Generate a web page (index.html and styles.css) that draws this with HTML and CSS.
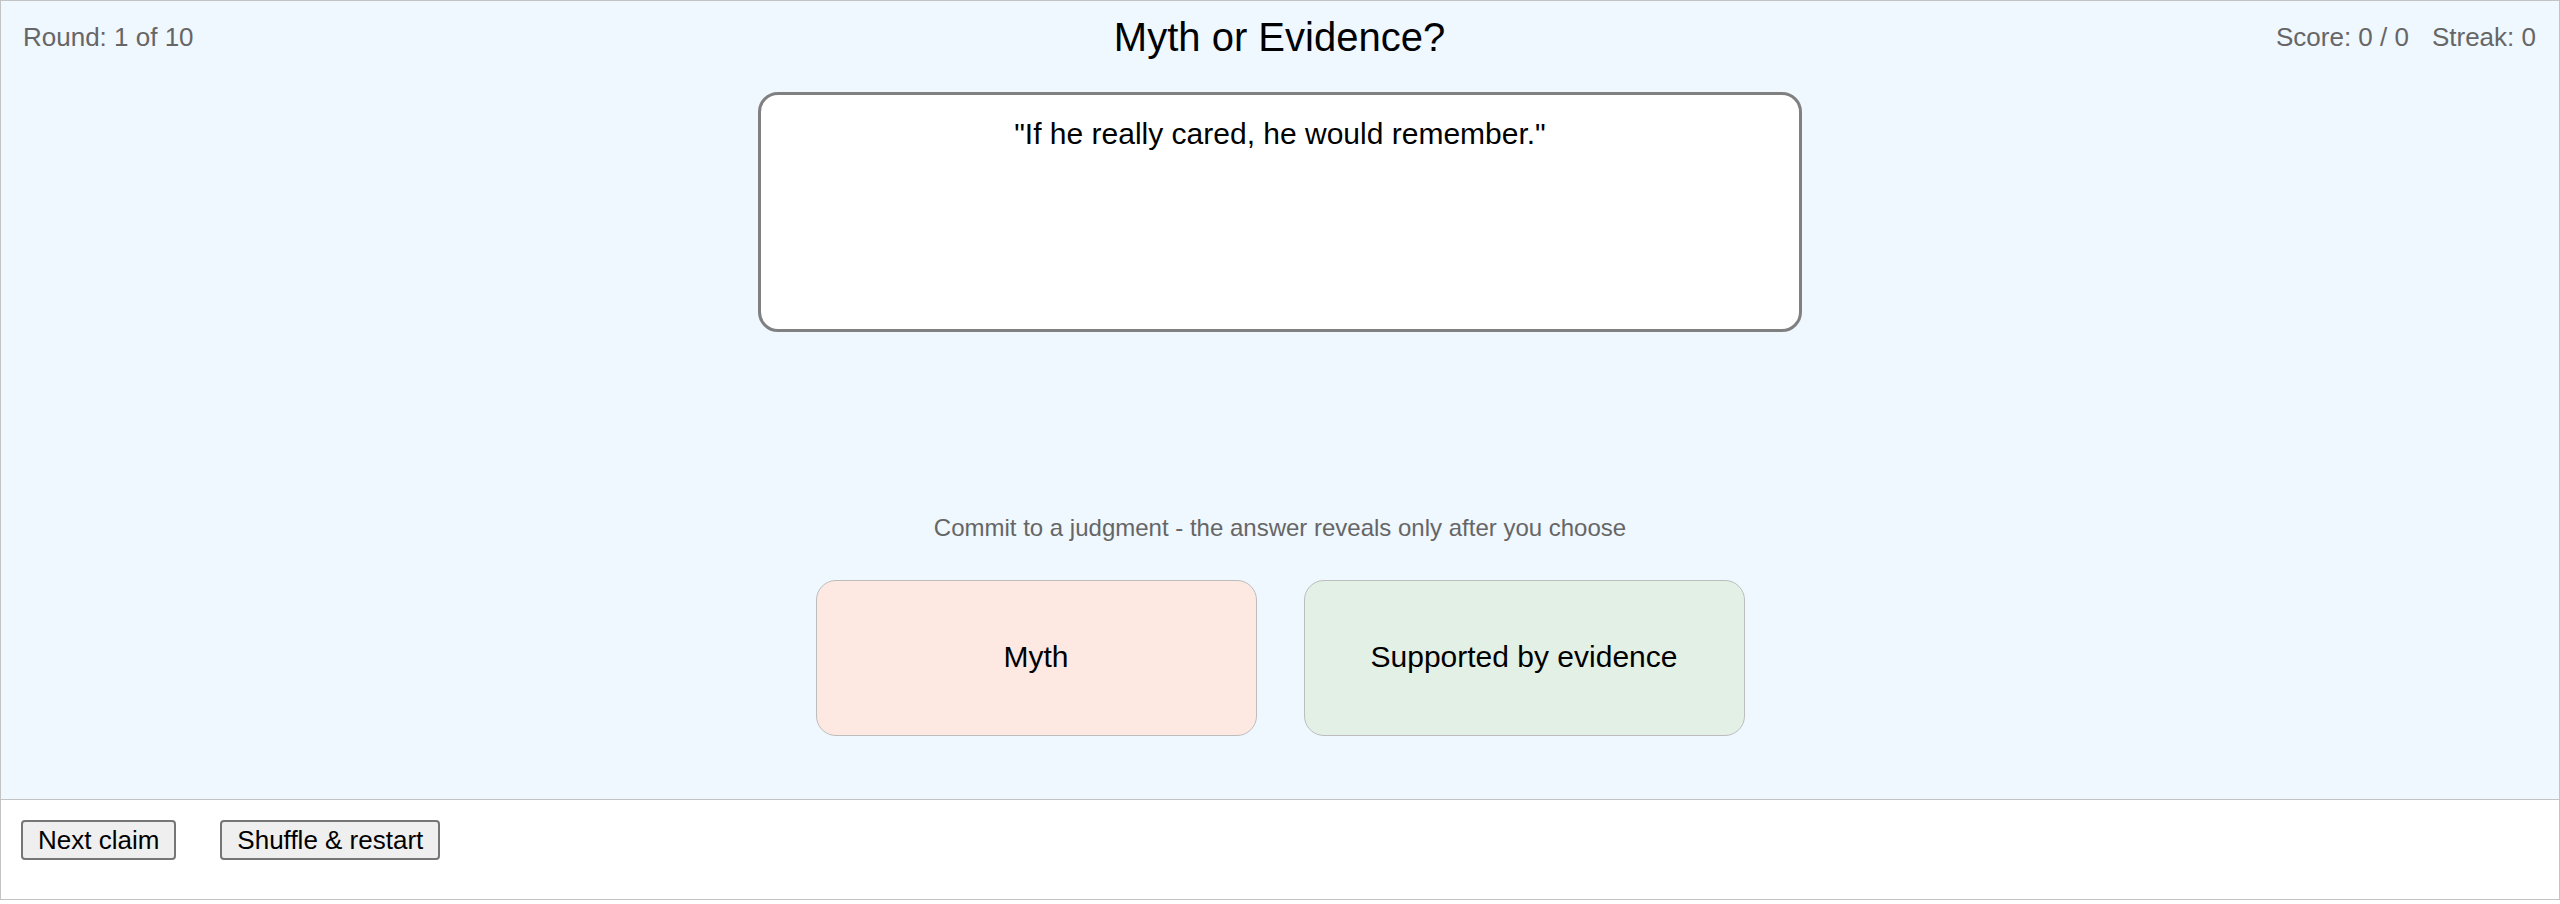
FILE: index.html
```html
<!DOCTYPE html>
<html lang="en">
<head>
<meta charset="utf-8">
<title>Myth or Evidence?</title>
<link rel="stylesheet" href="styles.css">
</head>
<body>
<div class="frame">
  <main class="stage">
    <header class="topbar">
      <div class="meta meta-left">Round: 1 of 10</div>
      <h1 class="title">Myth or Evidence?</h1>
      <div class="meta meta-right"><span>Score: 0 / 0</span><span class="streak">Streak: 0</span></div>
    </header>
    <section class="claim-card">
      <p class="claim-text">"If he really cared, he would remember."</p>
    </section>
    <p class="hint">Commit to a judgment - the answer reveals only after you choose</p>
    <div class="choices">
      <button class="choice choice-myth" type="button">Myth</button>
      <button class="choice choice-evidence" type="button">Supported by evidence</button>
    </div>
  </main>
  <footer class="controls">
    <button class="ctrl" type="button">Next claim</button>
    <button class="ctrl" type="button">Shuffle &amp; restart</button>
  </footer>
</div>
</body>
</html>
```

FILE: styles.css
```css
* {
  box-sizing: border-box;
}

html, body {
  margin: 0;
  padding: 0;
  background: #ffffff;
}

body {
  font-family: "Liberation Sans", Arial, Helvetica, sans-serif;
  color: #000;
}

.frame {
  width: 2560px;
  height: 900px;
  border: 1px solid #c3c3c3;
  display: flex;
  flex-direction: column;
}

.stage {
  height: 798px;
  background: #eff7ff;
  display: flex;
  flex-direction: column;
  align-items: center;
}

.topbar {
  width: 100%;
  display: grid;
  grid-template-columns: 1fr auto 1fr;
  padding: 13px 23px 0 22px;
}

.meta {
  font-size: 26px;
  line-height: 30px;
  color: #666666;
  margin-top: 8px;
}

.meta-right {
  justify-self: end;
}

.streak {
  margin-left: 23px;
}

.title {
  margin: 0;
  font-size: 40px;
  line-height: 46px;
  font-weight: normal;
  color: #000;
}

.claim-card {
  margin-top: 32px;
  width: 1044px;
  height: 240px;
  background: #ffffff;
  border: 3px solid #808080;
  border-radius: 20px;
  padding: 22px 30px 0;
  text-align: center;
}

.claim-text {
  margin: 0;
  font-size: 30px;
  line-height: 34px;
}

.hint {
  margin: 182px 0 0;
  font-size: 24px;
  line-height: 28px;
  color: #666666;
}

.choices {
  margin-top: 38px;
  display: flex;
  gap: 47px;
}

.choice {
  width: 441px;
  height: 156px;
  border: 1px solid #bdbdbd;
  border-radius: 20px;
  font-family: "Liberation Sans", Arial, Helvetica, sans-serif;
  font-size: 30px;
  color: #000;
  padding: 0 0 2px;
}

.choice-myth {
  background: #fde9e2;
}

.choice-evidence {
  background: #e3f0e6;
}

.controls {
  flex: 1;
  border-top: 1px solid #c3c3c3;
  background: #ffffff;
  padding: 20px 20px 0;
  display: flex;
  align-items: flex-start;
  gap: 44px;
}

.ctrl {
  font-family: "Liberation Sans", Arial, Helvetica, sans-serif;
  font-size: 26px;
  line-height: 30px;
  height: 40px;
  padding: 3px 15px;
  border: 2px solid #767676;
  border-radius: 4px;
  background: #efefef;
  color: #000;
}
```
